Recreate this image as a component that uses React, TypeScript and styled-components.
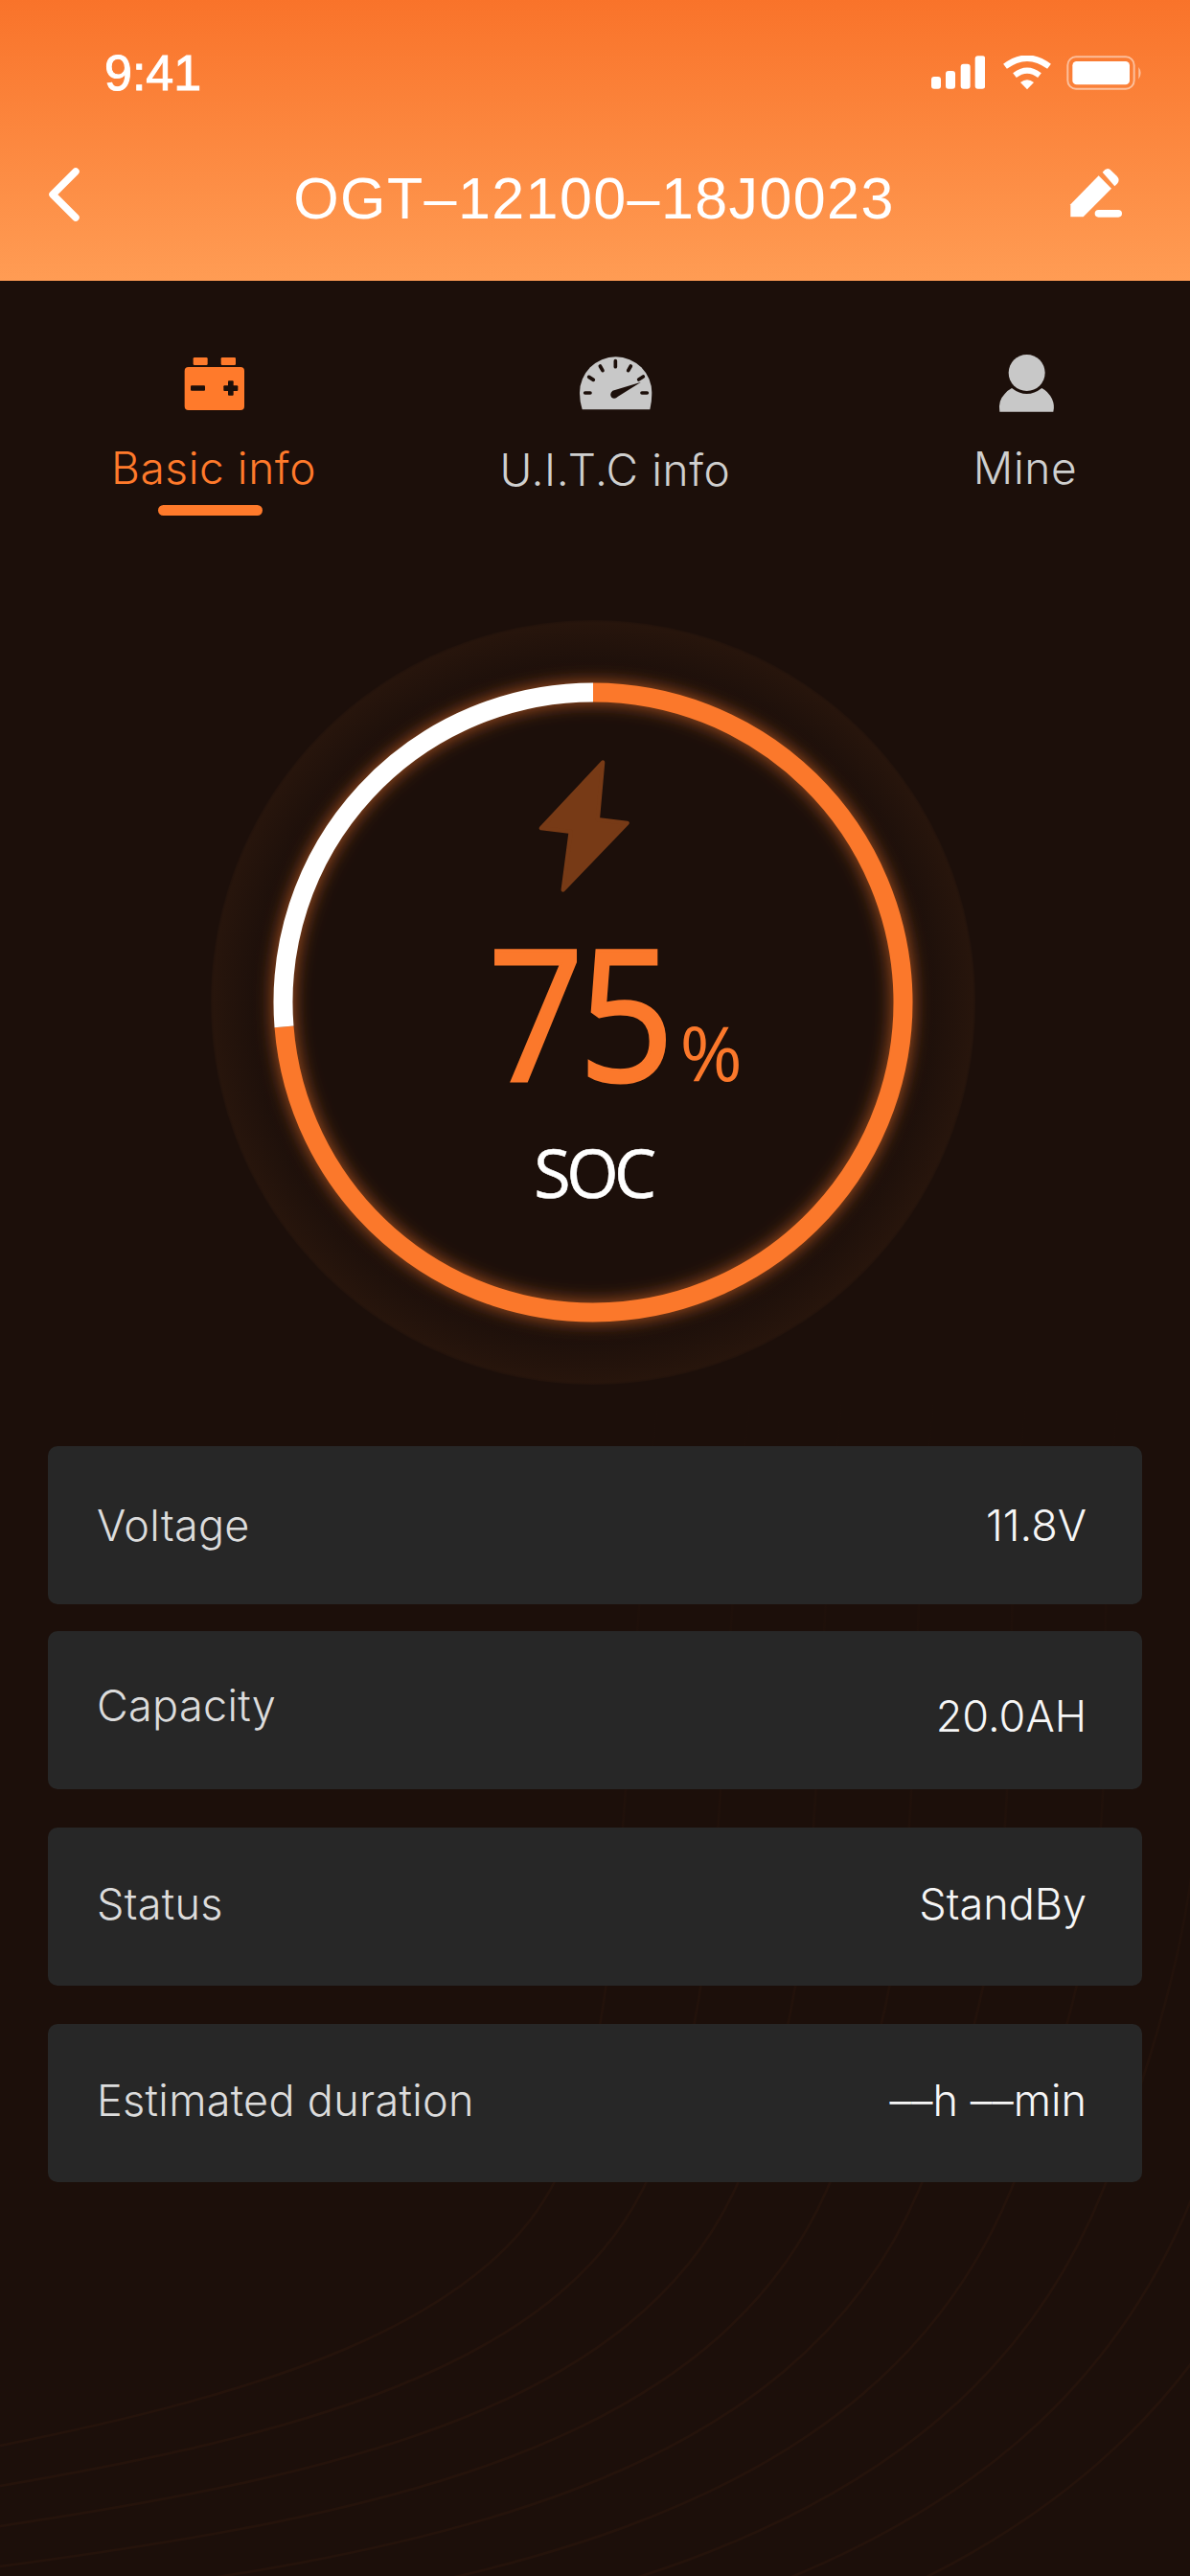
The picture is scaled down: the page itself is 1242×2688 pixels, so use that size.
import React from "react";
import styled, { createGlobalStyle } from "styled-components";

const Global = createGlobalStyle`
  html, body { margin: 0; padding: 0; background: #1c0f0a; }
  * { box-sizing: border-box; }
`;

const Page = styled.div`
  position: relative;
  width: 1242px;
  height: 2688px;
  overflow: hidden;
  background: #1c0f0a;
  font-family: "Liberation Sans", Arial, sans-serif;
`;

const Waves = styled.svg`
  position: absolute;
  left: 0;
  top: 0;
  pointer-events: none;
`;

const Header = styled.header`
  position: relative;
  height: 293px;
  padding-top: 58px;
  background: linear-gradient(180deg, #f9732a 0%, #ff9c54 100%);
  color: #fff;
`;

const StatusBar = styled.div`
  display: flex;
  align-items: center;
  height: 36px;
  padding: 0 47px 0 109px;
`;

const Clock = styled.span`
  flex: 1;
  font-size: 52px;
  line-height: 36px;
  font-weight: 400;
  -webkit-text-stroke: 1px #fff;
`;

const StatusIcons = styled.div`
  display: flex;
  align-items: center;
  gap: 0;
`;

const NavBar = styled.div`
  display: flex;
  align-items: center;
  justify-content: space-between;
  height: 75px;
  margin-top: 71px;
  padding: 0 52px 0 49px;
`;

const Title = styled.h1`
  flex: 1;
  margin: 8px 0 0 56px;
  font-size: 61px;
  line-height: 70px;
  font-weight: 400;
  letter-spacing: 1.4px;
  text-align: center;
`;

const Tabs = styled.nav`
  display: grid;
  grid-template-columns: 326px 512px 344px;
  padding: 66px 0 0 60px;
`;

const Tab = styled.div<{ $active?: boolean }>`
  display: flex;
  flex-direction: column;
  align-items: center;
  color: ${(p) => (p.$active ? "#ff7a2b" : "#cfcfcf")};
`;

const TabIcon = styled.svg<{ $shift?: number }>`
  display: block;
  margin-left: ${(p) => p.$shift ?? 0}px;
`;

const TabLabel = styled.span<{ $drop?: number }>`
  margin-top: ${(p) => 23 + (p.$drop ?? 0)}px;
  font-family: Inter, "Liberation Sans", sans-serif;
  font-weight: 300;
  font-size: 46px;
  line-height: 52px;
  letter-spacing: 0.6px;
`;

const TabBar = styled.span`
  width: 109px;
  height: 11px;
  margin: 13px 7px 0 0;
  border-radius: 6px;
  background: #ff7a2b;
`;

const Gauge = styled.section`
  position: relative;
  width: 800px;
  height: 800px;
  margin: 108px 0 0 219px;
  padding-top: 142px;
  display: flex;
  flex-direction: column;
  align-items: center;
`;

const GaugeArt = styled.svg`
  position: absolute;
  left: 0;
  top: 0;
`;

const Bolt = styled.svg`
  position: relative;
  display: block;
  margin-right: 19px;
`;

const Reading = styled.div`
  position: relative;
  display: flex;
  align-items: baseline;
  margin: 33px 0 0 30px;
  color: #fb782b;
  font-family: "Open Sans", "Noto Sans", sans-serif;
`;

const BigNumber = styled.span`
  display: block;
  font-size: 190px;
  line-height: 172px;
  letter-spacing: -6px;
  -webkit-text-stroke: 3px #fb782b;
  transform: scaleX(0.92);
  transform-origin: right center;
`;

const Percent = styled.span`
  margin-left: 11px;
  font-size: 79px;
  line-height: 76px;
`;

const Soc = styled.div`
  position: relative;
  margin-top: 42px;
  color: #fff;
  font-family: "Open Sans", "Noto Sans", sans-serif;
  font-size: 70px;
  line-height: 80px;
  letter-spacing: -4.5px;
  -webkit-text-stroke: 0.6px #fff;
`;

const Rows = styled.section`
  position: relative;
  margin: 63px 50px 0;
`;

const Row = styled.div<{ $gap: number }>`
  display: flex;
  align-items: center;
  justify-content: space-between;
  height: 165px;
  margin-top: ${(p) => p.$gap}px;
  padding: 0 58px 0 51px;
  border-radius: 10px;
  background: #272727;
  font-family: Inter, "Liberation Sans", sans-serif;
  font-weight: 300;
  font-size: 45px;
  line-height: 52px;
  letter-spacing: 0.3px;
`;

const Label = styled.span<{ $shift?: number }>`
  color: #dcdcdc;
  padding-top: ${(p) => Math.max(p.$shift ?? 0, 0) * 2}px;
  padding-bottom: ${(p) => Math.max(-(p.$shift ?? 0), 0) * 2}px;
`;

const Value = styled(Label)`
  color: #f6f6f6;
  letter-spacing: 0;
  font-feature-settings: "calt" 0;
`;

const range = (n: number) => Array.from({ length: n }, (_, i) => i);

const BackIcon = () => (
  <svg width="35" height="58" viewBox="0 0 35 58">
    <path d="M30 5 L6 29 L30 53" fill="none" stroke="#fff" strokeWidth="7.5" strokeLinecap="round" strokeLinejoin="round" />
  </svg>
);

const EditIcon = () => (
  <svg width="90" height="75" viewBox="0 0 270 225">
    <path d="M52 145 L140 55 L180 95 L92 184 L52 184 Z" fill="#fff" />
    <path d="M152 44 Q164 28 176 36 L197 56 Q208 68 198 80 L190 88 Z" fill="#fff" />
    <rect x="128" y="162" width="85" height="23" rx="11.5" fill="#fff" />
  </svg>
);

const SignalIcon = () => (
  <svg width="56" height="36" viewBox="0 0 168 108">
    <rect x="0" y="66" width="30" height="38" rx="9" fill="#fff" />
    <rect x="45" y="48" width="30" height="56" rx="9" fill="#fff" />
    <rect x="92" y="26" width="30" height="78" rx="9" fill="#fff" />
    <rect x="137" y="1" width="32" height="103" rx="9" fill="#fff" />
  </svg>
);

const WifiIcon = () => (
  <svg width="54" height="36" viewBox="0 0 162 108" style={{ marginLeft: 17 }}>
    <path d="M12 34 Q81 -18 150 34" fill="none" stroke="#fff" strokeWidth="19" strokeLinejoin="round" />
    <path d="M42 62 Q81 32 120 62" fill="none" stroke="#fff" strokeWidth="18" />
    <path d="M60 84 Q81 68 102 84 L81 106 Z" fill="#fff" />
  </svg>
);

const BatteryIcon = () => (
  <svg width="82" height="36" viewBox="0 0 246 108" style={{ marginLeft: 14 }}>
    <rect x="4" y="4" width="208" height="100" rx="26" fill="none" stroke="#fff" strokeOpacity="0.5" strokeWidth="6" />
    <rect x="19" y="18" width="179" height="73" rx="13" fill="#fff" />
    <path d="M226 36 Q240 54 226 74 Z" fill="#fff" fillOpacity="0.5" />
  </svg>
);

const BatteryTab = () => (
  <TabIcon $shift={3} width="90" height="80" viewBox="0 0 270 240">
    <rect x="65" y="42" width="45" height="24" rx="4" fill="#ff7a2b" />
    <rect x="152" y="42" width="46" height="24" rx="4" fill="#ff7a2b" />
    <rect x="38" y="72" width="187" height="135" rx="12" fill="#ff7a2b" />
    <rect x="57" y="130" width="45" height="16" rx="3" fill="#1c0f0a" />
    <rect x="160" y="130" width="45" height="17" rx="3" fill="#1c0f0a" />
    <rect x="174" y="115" width="17" height="46" rx="3" fill="#1c0f0a" />
  </TabIcon>
);

const GaugeTab = () => (
  <TabIcon width="95" height="80" viewBox="0 0 285 240">
    <path d="M38 205 Q30 180 30 153 A113 113 0 0 1 256 153 Q256 180 250 205 Z" fill="#c8c8c8" />
    <g stroke="#1c0f0a" strokeWidth="11" strokeLinecap="round">
      <path d="M47 153 H63" />
      <path d="M59 103 L73 112" />
      <path d="M94 69 L102 83" />
      <path d="M142 53 V71" />
      <path d="M190 69 L182 83" />
      <path d="M229 102 L215 111" />
      <path d="M225 153 H241" />
    </g>
    <path d="M222 119 L133 146 Q122 156 130 167 Q140 174 150 164 Z" fill="#1c0f0a" />
  </TabIcon>
);

const PersonTab = () => (
  <TabIcon $shift={5} width="85" height="80" viewBox="0 0 255 240">
    <circle cx="125" cy="90" r="57" fill="#c8c8c8" />
    <path d="M40 212 Q34 178 56 156 Q66 144 78 138 Q125 174 172 138 Q192 148 204 172 Q213 192 208 212 Z" fill="#c8c8c8" />
  </TabIcon>
);

const GaugeRing = () => (
  <GaugeArt width="800" height="800" viewBox="0 0 800 800">
    <defs>
      <radialGradient id="halo" cx="50%" cy="50%" r="50%">
        <stop offset="0.86" stopColor="#27150c" stopOpacity="0" />
        <stop offset="0.993" stopColor="#27150c" stopOpacity="1" />
        <stop offset="1" stopColor="#27150c" stopOpacity="0.5" />
      </radialGradient>
      <filter id="glow" x="-20%" y="-20%" width="140%" height="140%">
        <feGaussianBlur stdDeviation="9" />
      </filter>
    </defs>
    <circle cx="400" cy="400" r="399" fill="url(#halo)" />
    <circle cx="400" cy="400" r="323.5" fill="none" stroke="#ff7a2b" strokeOpacity="0.6" strokeWidth="22" filter="url(#glow)" />
    <path d="M400 76.5 A323.5 323.5 0 1 1 77.5 425.4" fill="none" stroke="#fb782b" strokeWidth="20" />
    <path d="M77.5 425.4 A323.5 323.5 0 0 1 400 76.5" fill="none" stroke="#fff" strokeWidth="20" />
  </GaugeArt>
);

const rows = [
  { label: "Voltage", value: "11.8V", gap: 0, labelShift: 0, valueShift: 0 },
  { label: "Capacity", value: "20.0AH", gap: 28, labelShift: -4.5, valueShift: 6 },
  { label: "Status", value: "StandBy", gap: 40, labelShift: -3, valueShift: -3 },
  { label: "Estimated duration", value: "––h ––min", gap: 40, labelShift: -3, valueShift: -3 },
];

const wavePath = (i: number) => {
  const y0 = 2552 + i * 42;
  const x1 = 578 + i * 96;
  return `M0 ${y0} C${x1 * 0.45} ${y0 - 52} ${x1 * 0.865} ${y0 - 122} ${x1} 2278 S${x1 + 70} 1800 ${x1 + 110} 1450`;
};

export default function App() {
  return (
    <Page>
      <Global />
      <Waves width="1242" height="2688" viewBox="0 0 1242 2688">
        <defs>
          <linearGradient id="waveFade" gradientUnits="userSpaceOnUse" x1="0" y1="1450" x2="0" y2="2400">
            <stop offset="0" stopColor="#25130b" stopOpacity="0" />
            <stop offset="1" stopColor="#25130b" stopOpacity="1" />
          </linearGradient>
        </defs>
        {range(9).map((i) => (
          <path key={i} d={wavePath(i)} fill="none" stroke="url(#waveFade)" strokeWidth="2.5" />
        ))}
      </Waves>
      <Header>
        <StatusBar>
          <Clock>9:41</Clock>
          <StatusIcons>
            <SignalIcon />
            <WifiIcon />
            <BatteryIcon />
          </StatusIcons>
        </StatusBar>
        <NavBar>
          <BackIcon />
          <Title>OGT–12100–18J0023</Title>
          <EditIcon />
        </NavBar>
      </Header>
      <Tabs>
        <Tab $active>
          <BatteryTab />
          <TabLabel>Basic info</TabLabel>
          <TabBar />
        </Tab>
        <Tab>
          <GaugeTab />
          <TabLabel $drop={2}>U.I.T.C info</TabLabel>
        </Tab>
        <Tab>
          <PersonTab />
          <TabLabel>Mine</TabLabel>
        </Tab>
      </Tabs>
      <Gauge>
        <GaugeRing />
        <Bolt width="99" height="148" viewBox="670 318 186 266">
          <path
            d="M800 326 L679 455 L737 462 L722 576 L848 445 L790 438 Z"
            fill="#773a16"
            stroke="#773a16"
            strokeWidth="8"
            strokeLinejoin="round"
          />
        </Bolt>
        <Reading>
          <BigNumber>75</BigNumber>
          <Percent>%</Percent>
        </Reading>
        <Soc>SOC</Soc>
      </Gauge>
      <Rows>
        {rows.map((r) => (
          <Row key={r.label} $gap={r.gap}>
            <Label $shift={r.labelShift}>{r.label}</Label>
            <Value $shift={r.valueShift}>{r.value}</Value>
          </Row>
        ))}
      </Rows>
    </Page>
  );
}
